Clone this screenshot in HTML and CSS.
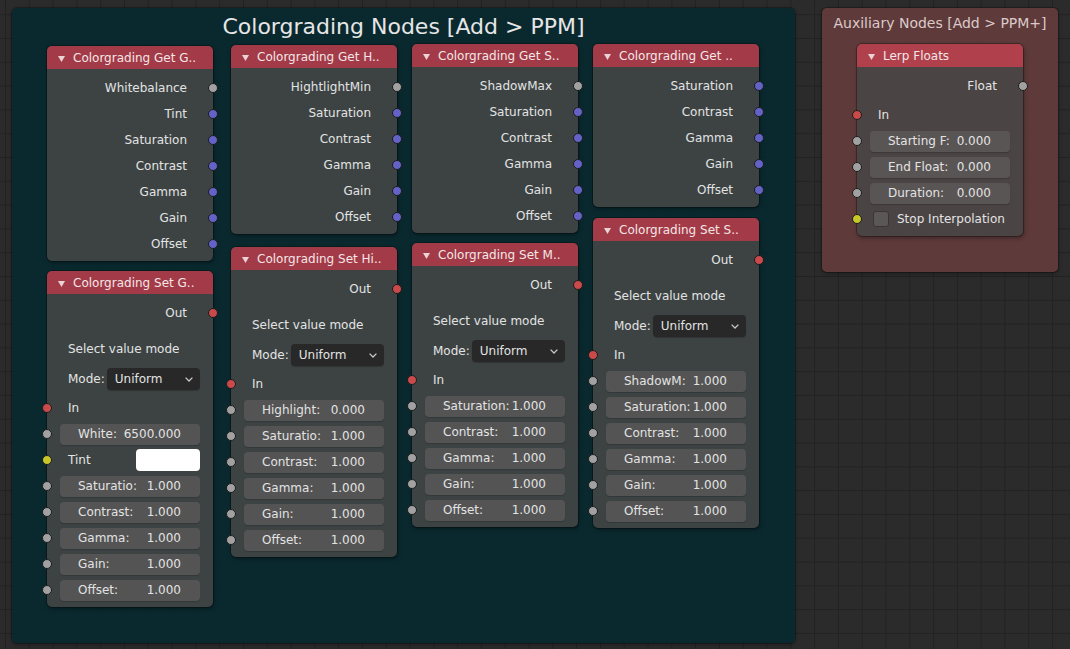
FILE: index.html
```html
<!DOCTYPE html>
<html>
<head>
<meta charset="utf-8">
<title>Node Editor</title>
<link rel="stylesheet" href="styles.css">
</head>
<body>
<div class="canvas">

  <section class="frame frame-cg">
    <div class="frame-title">Colorgrading Nodes [Add &gt; PPM]</div>

    <div class="node n-getg">
      <div class="node-header"><svg class="caret" viewBox="0 0 7 6"><polygon points="0,0 7,0 3.5,6"/></svg><span>Colorgrading Get G..</span></div>
      <div class="node-body">
        <div class="row out"><span>Whitebalance</span><i class="sock sock-r grey"></i></div>
        <div class="row out"><span>Tint</span><i class="sock sock-r blue"></i></div>
        <div class="row out"><span>Saturation</span><i class="sock sock-r blue"></i></div>
        <div class="row out"><span>Contrast</span><i class="sock sock-r blue"></i></div>
        <div class="row out"><span>Gamma</span><i class="sock sock-r blue"></i></div>
        <div class="row out"><span>Gain</span><i class="sock sock-r blue"></i></div>
        <div class="row out"><span>Offset</span><i class="sock sock-r blue"></i></div>
      </div>
    </div>

    <div class="node n-geth">
      <div class="node-header"><svg class="caret" viewBox="0 0 7 6"><polygon points="0,0 7,0 3.5,6"/></svg><span>Colorgrading Get H..</span></div>
      <div class="node-body">
        <div class="row out"><span>HightlightMin</span><i class="sock sock-r grey"></i></div>
        <div class="row out"><span>Saturation</span><i class="sock sock-r blue"></i></div>
        <div class="row out"><span>Contrast</span><i class="sock sock-r blue"></i></div>
        <div class="row out"><span>Gamma</span><i class="sock sock-r blue"></i></div>
        <div class="row out"><span>Gain</span><i class="sock sock-r blue"></i></div>
        <div class="row out"><span>Offset</span><i class="sock sock-r blue"></i></div>
      </div>
    </div>

    <div class="node n-gets">
      <div class="node-header"><svg class="caret" viewBox="0 0 7 6"><polygon points="0,0 7,0 3.5,6"/></svg><span>Colorgrading Get S..</span></div>
      <div class="node-body">
        <div class="row out"><span>ShadowMax</span><i class="sock sock-r grey"></i></div>
        <div class="row out"><span>Saturation</span><i class="sock sock-r blue"></i></div>
        <div class="row out"><span>Contrast</span><i class="sock sock-r blue"></i></div>
        <div class="row out"><span>Gamma</span><i class="sock sock-r blue"></i></div>
        <div class="row out"><span>Gain</span><i class="sock sock-r blue"></i></div>
        <div class="row out"><span>Offset</span><i class="sock sock-r blue"></i></div>
      </div>
    </div>

    <div class="node n-getx">
      <div class="node-header"><svg class="caret" viewBox="0 0 7 6"><polygon points="0,0 7,0 3.5,6"/></svg><span>Colorgrading Get ..</span></div>
      <div class="node-body">
        <div class="row out"><span>Saturation</span><i class="sock sock-r blue"></i></div>
        <div class="row out"><span>Contrast</span><i class="sock sock-r blue"></i></div>
        <div class="row out"><span>Gamma</span><i class="sock sock-r blue"></i></div>
        <div class="row out"><span>Gain</span><i class="sock sock-r blue"></i></div>
        <div class="row out"><span>Offset</span><i class="sock sock-r blue"></i></div>
      </div>
    </div>

    <div class="node n-setg">
      <div class="node-header"><svg class="caret" viewBox="0 0 7 6"><polygon points="0,0 7,0 3.5,6"/></svg><span>Colorgrading Set G..</span></div>
      <div class="node-body">
        <div class="row out"><span>Out</span><i class="sock sock-r red"></i></div>
        <div class="row label">Select value mode</div>
        <div class="row mode"><span>Mode:</span><div class="select"><span>Uniform</span><svg class="chev" viewBox="0 0 8 5"><polyline points="0.6,0.6 4,4 7.4,0.6"/></svg></div></div>
        <div class="row in first-in"><i class="sock sock-l red"></i><span>In</span></div>
        <div class="row"><i class="sock sock-l grey"></i><div class="field"><span>White:</span><span>6500.000</span></div></div>
        <div class="row in"><i class="sock sock-l yellow"></i><span>Tint</span><div class="swatch"></div></div>
        <div class="row"><i class="sock sock-l grey"></i><div class="field"><span>Saturatio:</span><span>1.000</span></div></div>
        <div class="row"><i class="sock sock-l grey"></i><div class="field"><span>Contrast:</span><span>1.000</span></div></div>
        <div class="row"><i class="sock sock-l grey"></i><div class="field"><span>Gamma:</span><span>1.000</span></div></div>
        <div class="row"><i class="sock sock-l grey"></i><div class="field"><span>Gain:</span><span>1.000</span></div></div>
        <div class="row"><i class="sock sock-l grey"></i><div class="field"><span>Offset:</span><span>1.000</span></div></div>
      </div>
    </div>

    <div class="node n-seth">
      <div class="node-header"><svg class="caret" viewBox="0 0 7 6"><polygon points="0,0 7,0 3.5,6"/></svg><span>Colorgrading Set Hi..</span></div>
      <div class="node-body">
        <div class="row out"><span>Out</span><i class="sock sock-r red"></i></div>
        <div class="row label">Select value mode</div>
        <div class="row mode"><span>Mode:</span><div class="select"><span>Uniform</span><svg class="chev" viewBox="0 0 8 5"><polyline points="0.6,0.6 4,4 7.4,0.6"/></svg></div></div>
        <div class="row in first-in"><i class="sock sock-l red"></i><span>In</span></div>
        <div class="row"><i class="sock sock-l grey"></i><div class="field"><span>Highlight:</span><span>0.000</span></div></div>
        <div class="row"><i class="sock sock-l grey"></i><div class="field"><span>Saturatio:</span><span>1.000</span></div></div>
        <div class="row"><i class="sock sock-l grey"></i><div class="field"><span>Contrast:</span><span>1.000</span></div></div>
        <div class="row"><i class="sock sock-l grey"></i><div class="field"><span>Gamma:</span><span>1.000</span></div></div>
        <div class="row"><i class="sock sock-l grey"></i><div class="field"><span>Gain:</span><span>1.000</span></div></div>
        <div class="row"><i class="sock sock-l grey"></i><div class="field"><span>Offset:</span><span>1.000</span></div></div>
      </div>
    </div>

    <div class="node n-setm">
      <div class="node-header"><svg class="caret" viewBox="0 0 7 6"><polygon points="0,0 7,0 3.5,6"/></svg><span>Colorgrading Set M..</span></div>
      <div class="node-body">
        <div class="row out"><span>Out</span><i class="sock sock-r red"></i></div>
        <div class="row label">Select value mode</div>
        <div class="row mode"><span>Mode:</span><div class="select"><span>Uniform</span><svg class="chev" viewBox="0 0 8 5"><polyline points="0.6,0.6 4,4 7.4,0.6"/></svg></div></div>
        <div class="row in first-in"><i class="sock sock-l red"></i><span>In</span></div>
        <div class="row"><i class="sock sock-l grey"></i><div class="field"><span>Saturation:</span><span>1.000</span></div></div>
        <div class="row"><i class="sock sock-l grey"></i><div class="field"><span>Contrast:</span><span>1.000</span></div></div>
        <div class="row"><i class="sock sock-l grey"></i><div class="field"><span>Gamma:</span><span>1.000</span></div></div>
        <div class="row"><i class="sock sock-l grey"></i><div class="field"><span>Gain:</span><span>1.000</span></div></div>
        <div class="row"><i class="sock sock-l grey"></i><div class="field"><span>Offset:</span><span>1.000</span></div></div>
      </div>
    </div>

    <div class="node n-sets">
      <div class="node-header"><svg class="caret" viewBox="0 0 7 6"><polygon points="0,0 7,0 3.5,6"/></svg><span>Colorgrading Set S..</span></div>
      <div class="node-body">
        <div class="row out"><span>Out</span><i class="sock sock-r red"></i></div>
        <div class="row label">Select value mode</div>
        <div class="row mode"><span>Mode:</span><div class="select"><span>Uniform</span><svg class="chev" viewBox="0 0 8 5"><polyline points="0.6,0.6 4,4 7.4,0.6"/></svg></div></div>
        <div class="row in first-in"><i class="sock sock-l red"></i><span>In</span></div>
        <div class="row"><i class="sock sock-l grey"></i><div class="field"><span>ShadowM:</span><span>1.000</span></div></div>
        <div class="row"><i class="sock sock-l grey"></i><div class="field"><span>Saturation:</span><span>1.000</span></div></div>
        <div class="row"><i class="sock sock-l grey"></i><div class="field"><span>Contrast:</span><span>1.000</span></div></div>
        <div class="row"><i class="sock sock-l grey"></i><div class="field"><span>Gamma:</span><span>1.000</span></div></div>
        <div class="row"><i class="sock sock-l grey"></i><div class="field"><span>Gain:</span><span>1.000</span></div></div>
        <div class="row"><i class="sock sock-l grey"></i><div class="field"><span>Offset:</span><span>1.000</span></div></div>
      </div>
    </div>
  </section>

  <section class="frame frame-aux">
    <div class="frame-title">Auxiliary Nodes [Add &gt; PPM+]</div>

    <div class="node node-aux n-lerp">
      <div class="node-header"><svg class="caret" viewBox="0 0 7 6"><polygon points="0,0 7,0 3.5,6"/></svg><span>Lerp Floats</span></div>
      <div class="node-body">
        <div class="row out"><span>Float</span><i class="sock sock-r grey"></i></div>
        <div class="row in first-in"><i class="sock sock-l red"></i><span>In</span></div>
        <div class="row"><i class="sock sock-l grey"></i><div class="field"><span>Starting F:</span><span>0.000</span></div></div>
        <div class="row"><i class="sock sock-l grey"></i><div class="field"><span>End Float:</span><span>0.000</span></div></div>
        <div class="row"><i class="sock sock-l grey"></i><div class="field"><span>Duration:</span><span>0.000</span></div></div>
        <div class="row check"><i class="sock sock-l yellow"></i><div class="checkbox"></div><span>Stop Interpolation</span></div>
      </div>
    </div>
  </section>

</div>
</body>
</html>
```

FILE: styles.css
```css
html, body {
  margin: 0;
  padding: 0;
}

body {
  width: 1070px;
  height: 649px;
  overflow: hidden;
  background-color: #2b2b2b;
  background-image:
    linear-gradient(to right, #222222 1px, transparent 1px),
    linear-gradient(to bottom, #222222 1px, transparent 1px);
  background-size: 23.8px 23.8px;
  background-position: 5px 14.2px;
  font-family: "DejaVu Sans", "Liberation Sans", sans-serif;
  font-size: 12px;
  color: #e3e3e3;
}

.canvas {
  position: relative;
  width: 1070px;
  height: 649px;
}

/* ---------- frames ---------- */
.frame {
  position: absolute;
  border-radius: 5px;
  box-shadow: 0 0 0 1px rgba(0, 0, 0, 0.25), 0 2px 4px rgba(0, 0, 0, 0.3);
}

.frame-cg {
  left: 12px;
  top: 8px;
  width: 783px;
  height: 635px;
  background: rgba(4, 42, 49, 0.82);
}

.frame-aux {
  left: 822px;
  top: 8px;
  width: 236px;
  height: 264px;
  background: rgba(106, 62, 62, 0.82);
}

.frame-title {
  text-align: center;
  font-size: 22px;
  line-height: 26px;
  padding-top: 6px;
  color: #e6e6e6;
  white-space: nowrap;
}

.frame-aux .frame-title {
  font-size: 14px;
  line-height: 16px;
  padding-top: 7px;
  color: #dccaca;
}

/* ---------- nodes ---------- */
.node {
  position: absolute;
  width: 166px;
  border-radius: 5px;
  background: #3d4343;
  box-shadow: 0 0 0 1px rgba(0, 0, 0, 0.28), 1px 2px 4px rgba(0, 0, 0, 0.35);
}

.n-getg { left: 35px;  top: 38px; }
.n-geth { left: 219px; top: 37px; }
.n-gets { left: 400px; top: 36px; }
.n-getx { left: 581px; top: 36px; }
.n-setg { left: 35px;  top: 263px; }
.n-seth { left: 219px; top: 239px; }
.n-setm { left: 400px; top: 235px; }
.n-sets { left: 581px; top: 210px; }
.n-lerp { left: 35px;  top: 36px; }

.node-header {
  height: 23px;
  box-sizing: border-box;
  padding: 2px 0 0 11px;
  display: flex;
  align-items: flex-start;
  background: #a33a48;
  border-radius: 5px 5px 0 0;
  color: #f3e6e6;
  white-space: nowrap;
  overflow: hidden;
}

.node-header span {
  line-height: 21px;
}

.caret {
  flex: none;
  width: 7px;
  height: 6px;
  margin: 8px 8px 0 0;
  fill: #ebd2d5;
}

.node-body {
  padding: 6px 0 4px;
}

.row {
  position: relative;
  height: 26px;
  line-height: 26px;
  display: flex;
  align-items: center;
  white-space: nowrap;
}

.row.out {
  justify-content: flex-end;
  padding-right: 26px;
}

.row.in,
.row.label,
.row.mode {
  padding-left: 21px;
}

.row.label { margin-top: 10px; }
.row.mode  { margin-top: 4px; }
.row.first-in { margin-top: 3px; }

/* sockets */
.sock {
  position: absolute;
  top: 8px;
  width: 10px;
  height: 10px;
  box-sizing: border-box;
  border-radius: 50%;
  border: 1px solid #1c1c1c;
}

.sock-r { right: -5px; }
.sock-l { left: -5px; }

.grey   { background: #a1a1a1; }
.blue   { background: #6363c7; }
.red    { background: #c84a4a; }
.yellow { background: #c7c729; }

/* number fields */
.field {
  flex: 1;
  margin: 1px 13px 0 13px;
  height: 21px;
  line-height: 21px;
  box-sizing: border-box;
  padding: 0 19px 0 18px;
  display: flex;
  justify-content: space-between;
  align-items: center;
  border-radius: 4px;
  background: #545454;
  box-shadow: 0 1px 1px rgba(0, 0, 0, 0.18);
}

/* dropdown */
.select {
  flex: 1;
  margin: 0 13px 0 2px;
  height: 22px;
  line-height: 22px;
  box-sizing: border-box;
  padding: 0 7px 0 8px;
  display: flex;
  justify-content: space-between;
  align-items: center;
  border-radius: 4px;
  background: #282828;
  box-shadow: 0 1px 1px rgba(0, 0, 0, 0.2);
}

.chev {
  width: 8px;
  height: 5px;
  fill: none;
  stroke: #c9c9c9;
  stroke-width: 1.3;
}

/* colour swatch */
.swatch {
  margin: 0 13px 0 auto;
  width: 64px;
  height: 22px;
  border-radius: 4px;
  background: #ffffff;
}

/* auxiliary node variants */
.node-aux {
  background: #4a4444;
}

.node-aux .node-header {
  background: #b0404c;
}

.node-aux .field {
  background: #5a5555;
}

.row.check {
  padding-left: 16px;
}

.checkbox {
  flex: none;
  width: 16px;
  height: 16px;
  box-sizing: border-box;
  margin-right: 8px;
  border-radius: 3px;
  background: #5b5757;
  border: 1px solid #3b3535;
}
```
